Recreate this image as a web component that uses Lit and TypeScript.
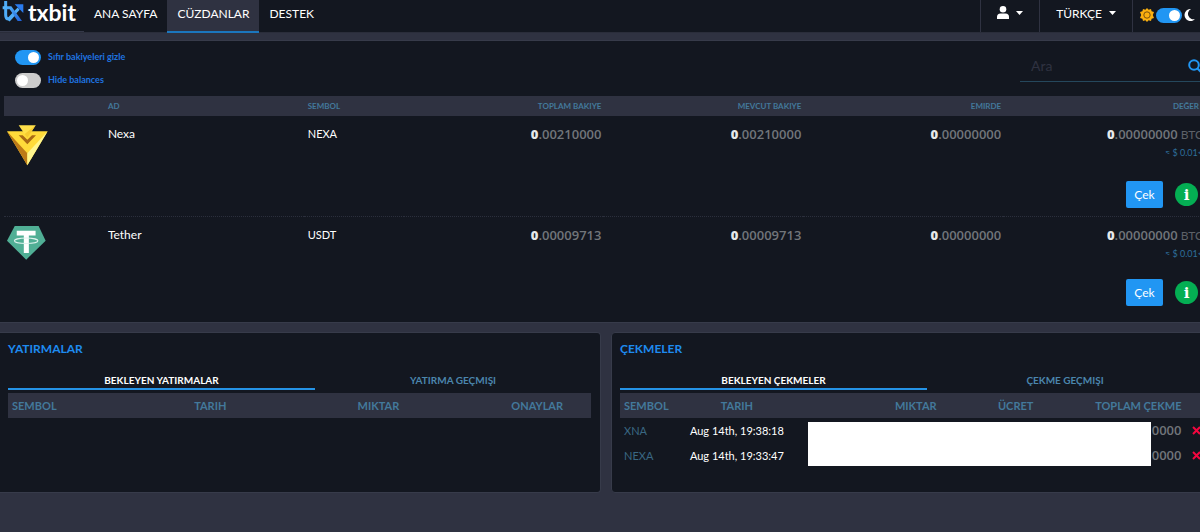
import { LitElement, html, css, svg } from "lit";
import { customElement, state } from "lit/decorators.js";

interface Wallet { name: string; symbol: string; icon: unknown; total: string; available: string; }

const nexaIcon = html`<svg viewBox="0 0 123 123" width="41" height="41" aria-hidden="true">
  <path d="M0 19H122L61 121Z" fill="#ffdb3a"/>
  <path d="M0 19L61 85V121Z" fill="#bd7a18"/>
  <path d="M122 19L61 85V121Z" fill="#fff68e"/>
  <path d="M35 31H47L61 44L75 31H87L61 58Z" fill="#a96a15"/>
  <path d="M35 1H86L61 39Z" fill="#ffe04a"/>
  <path d="M61 39L53 27L86 1Z" fill="#f6cb30"/>
</svg>`;
const tetherIcon = html`<svg viewBox="0 0 116 113" width="39" height="38" aria-hidden="true">
  <path d="M23 0H94L115 44L57 100L0 44Z" fill="#50af95"/>
  <path d="M29 14H85V28H65V80H50V28H29Z" fill="#fff"/>
  <ellipse cx="57" cy="44" rx="35" ry="8" fill="none" stroke="#dff3ee" stroke-width="3"/>
</svg>`;

const wallets: Wallet[] = [
  { name: "Nexa", symbol: "NEXA", icon: nexaIcon, total: "00210000", available: "00210000" },
  { name: "Tether", symbol: "USDT", icon: tetherIcon, total: "00009713", available: "00009713" },
];
const pending = [
  { symbol: "XNA", date: "Aug 14th, 19:38:18" },
  { symbol: "NEXA", date: "Aug 14th, 19:33:47" },
];
const amount = (f: string) => html`<span class="amount"><b>0</b>.${f}</span>`;

@customElement("app-root")
export class AppRoot extends LitElement {
  @state() private hideZero = true;
  @state() private hideBalances = false;
  @state() private dark = true;

  static styles = css`
    :host { display: block; overflow: hidden; min-height: 100vh; background: #2f3241; color: #fff; font: 13px/16px Lato, sans-serif; }
    * { box-sizing: border-box; }
    a { color: inherit; text-decoration: none; }
    button { font: inherit; color: inherit; border: 0; background: none; padding: 0; cursor: pointer; }
    h2 { margin: 0; }
    nav { display: flex; height: 33px; background: #131720; border-bottom: 1px solid #2a2d3a; font-size: 12px; }
    .brand { display: flex; gap: 4px; width: 84px; padding-left: 2px; border-bottom: 1px solid #343848; }
    .brand svg { margin-top: 1px; flex: none; }
    .word { font-size: 23px; line-height: 24px; font-weight: 700; }
    .tab { display: flex; justify-content: center; padding: 6px 10px 0; }
    .tab.active { background: #2f3241; border-bottom: 2px solid #1b76bd; height: 33px; }
    .right { margin-left: auto; display: flex; }
    .menu { display: flex; align-items: flex-start; gap: 7px; padding: 6px 16px 0; border-left: 1px solid #2f3241; height: 32px; }
    .menu .caret { margin-top: 5px; }
    .theme { display: flex; align-items: center; gap: 2px; padding: 0 4px 2px 7px; border-left: 1px solid #2f3241; }
    .switch { appearance: none; margin: 0; width: 26px; height: 15px; border-radius: 8px; background: #ccc; padding: 2px; display: flex; flex: none; cursor: pointer; }
    .switch::before { content: ""; width: 11px; height: 11px; border-radius: 50%; background: #fff; }
    .switch:checked { background: #2196f3; justify-content: flex-end; }

    .page { width: calc(100% + 12px); padding-top: 7px; }
    .panel { background: #131720; border: 1px solid #373b4a; border-radius: 4px; }
    .wallets { border-left: 0; border-radius: 0; padding: 8px 8px 8px 4px; }
    .tools { display: flex; justify-content: space-between; }
    .options { display: flex; flex-direction: column; gap: 7px; padding-left: 11px; height: 47px; }
    .options label { display: flex; align-items: center; gap: 7px; height: 16px; font-size: 9px; font-weight: 700; color: #1f74e0; }
    .search { display: flex; align-items: center; width: 183px; height: 33px; border-bottom: 1px solid #25475c; padding: 1px 1px 0 11px; }
    .search input { flex: 1; min-width: 0; border: 0; padding: 0; background: none; outline: 0; color: #fff; font: 14px/18px Lato, sans-serif; }
    .search input::placeholder { color: #2f3241; opacity: 1; }

    table { width: 100%; table-layout: fixed; border-collapse: collapse; }
    th { color: #43799b; background: #2f3241; font-weight: 700; }
    td, th { padding: 0 4px; text-align: left; }
    .num { text-align: right; }
    .mid { text-align: center; }
    .main th { height: 20px; font-size: 8px; line-height: 12px; }
    .main th.num, .main td.num { padding-right: 2px; }
    .main td { vertical-align: top; padding-top: 10px; font-size: 12px; }
    .main td.symbol { font-size: 11px; }
    .main td.coin { padding: 9px 3px 7px; }
    .coin svg { display: block; }
    .main tr.actions td { padding: 8px 5px 8px 0; }
    .main tbody + tbody { border-top: 1px dotted #2b2f3c; }
    .main th.worth { padding-right: 4px; }
    .main td.value { padding-right: 0; white-space: nowrap; }
    .amount { font: 600 13px/16px "Open Sans", sans-serif; color: #71757a; }
    .amount b { color: #e6e8ea; }
    .unit { color: #5d6167; }
    .fiat { display: block; padding-top: 3px; font-size: 9px; line-height: 14px; color: #2e6f9c; }
    .buttons { display: flex; justify-content: flex-end; align-items: center; gap: 12px; }
    .withdraw { width: 37px; height: 27px; border-radius: 2px; background: #2196f3; }
    .info { width: 23px; height: 23px; border-radius: 50%; background: #04ae53; font: 700 15px/22px "DejaVu Serif", serif; }

    .lower { display: grid; grid-template-columns: 1fr 1fr; gap: 10px; padding-top: 9px; }
    .card { position: relative; min-height: 161px; padding: 8px 8px; }
    .card.first { border-left: 0; padding-right: 9px; border-radius: 0 4px 4px 0; }
    h2 { font-size: 12px; line-height: 16px; font-weight: 700; color: #1e8bf0; }
    .tabs { display: grid; grid-template-columns: 307fr 276fr; padding-top: 14px; }
    .tabs button { height: 19px; font-size: 10px; line-height: 16px; font-weight: 700; color: #4b86ad; border-bottom: 2px solid transparent; }
    .tabs .on { color: #fff; border-bottom-color: #2593e6; }
    .history { margin-top: 3px; font-size: 11px; }
    .history th { height: 25px; }
    .history td { height: 25px; white-space: nowrap; }
    .sym { color: #3a6883; }
    .mask { position: absolute; top: 89px; left: 196px; right: 60px; height: 44px; background: #fff; }
    .remove { display: block; margin-left: 3px; }
  `;

  private caret() {
    return html`<svg class="caret" viewBox="0 0 7 4" width="7" height="4" aria-hidden="true"><path d="M0 0H7L3.5 4Z" fill="#fff"/></svg>`;
  }

  render() {
    return html`
      <nav>
        <a class="brand" href="#" aria-label="txbit">
          <svg viewBox="6 0 66 66" width="22" height="22" aria-hidden="true">
            <defs><linearGradient id="g" x1="0" y1="0" x2="1" y2="1"><stop offset="0" stop-color="#58bcff"/><stop offset="1" stop-color="#1e5fd8"/></linearGradient></defs>
            <path d="M17 0V42Q17 54 26 54L56 23" fill="none" stroke="#4fadf8" stroke-width="9"/>
            <path d="M8 16H34L66 60H53L29 25H8Z" fill="url(#g)"/>
            <path d="M44 10H70V36Z" fill="#2a7cf0"/>
            <path d="M26 59L41 42" stroke="#4fadf8" stroke-width="8"/>
          </svg>
          <span class="word">txbit</span>
        </a>
        <a class="tab" href="#">ANA SAYFA</a>
        <a class="tab active" href="#">CÜZDANLAR</a>
        <a class="tab" href="#">DESTEK</a>
        <div class="right">
          <button class="menu" aria-label="Hesap">
            <svg viewBox="0 0 12 13" width="12" height="13" aria-hidden="true"><circle cx="6" cy="3.3" r="3.3" fill="#fff"/><path d="M0 13V11Q0 7.5 3.5 7.5H8.5Q12 7.5 12 11V13Z" fill="#fff"/></svg>
            ${this.caret()}
          </button>
          <button class="menu">TÜRKÇE ${this.caret()}</button>
          <div class="theme">
            <svg viewBox="0 0 14 14" width="14" height="14" aria-hidden="true"><path d="M7 0L8.6 1.8L11 1L11.6 3.2L14 4L12.8 7L14 10L11.6 10.8L11 13L8.6 12.2L7 14L5.4 12.2L3 13L2.4 10.8L0 10L1.2 7L0 4L2.4 3.2L3 1L5.4 1.8Z" fill="#fbb00f"/><circle cx="7" cy="7" r="3.2" fill="none" stroke="#7a5210"/></svg>
            <input class="switch" type="checkbox" aria-label="Tema" .checked=${this.dark} @change=${() => (this.dark = !this.dark)} />
            <svg viewBox="0 0 12 12" width="12" height="12" aria-hidden="true"><path d="M7 0A6 6 0 1 0 11 10A5.4 5.4 0 0 1 7 0Z" fill="#fff"/></svg>
          </div>
        </div>
      </nav>
      <main class="page">
        <section class="panel wallets">
          <div class="tools">
            <div class="options">
              <label><input class="switch" type="checkbox" .checked=${this.hideZero} @change=${() => (this.hideZero = !this.hideZero)} />Sıfır bakiyeleri gizle</label>
              <label><input class="switch" type="checkbox" .checked=${this.hideBalances} @change=${() => (this.hideBalances = !this.hideBalances)} />Hide balances</label>
            </div>
            <label class="search">
              <input type="text" placeholder="Ara" aria-label="Ara" />
              <svg viewBox="0 0 14 14" width="14" height="14" aria-hidden="true"><circle cx="6" cy="6" r="4.8" fill="none" stroke="#2196f3" stroke-width="2"/><path d="M9.5 9.5L13 13" stroke="#2196f3" stroke-width="2"/></svg>
            </label>
          </div>
          <table class="main">
            <colgroup><col style="width:8.33%"><col style="width:16.67%"><col style="width:8.33%"><col style="width:16.67%"><col style="width:16.67%"><col style="width:16.67%"><col style="width:16.66%"></colgroup>
            <thead><tr><th></th><th>AD</th><th>SEMBOL</th><th class="num">TOPLAM BAKIYE</th><th class="num">MEVCUT BAKIYE</th><th class="num">EMIRDE</th><th class="num worth">DEĞER</th></tr></thead>
            ${wallets.map((w) => html`<tbody>
              <tr>
                <td class="coin">${w.icon}</td><td>${w.name}</td><td class="symbol">${w.symbol}</td>
                <td class="num">${amount(w.total)}</td><td class="num">${amount(w.available)}</td><td class="num">${amount("00000000")}</td>
                <td class="num value">${amount("00000000")} <span class="unit">BTC</span><span class="fiat">≈ $ 0.01&lt;</span></td>
              </tr>
              <tr class="actions"><td colspan="7"><div class="buttons"><button class="withdraw">Çek</button><button class="info" aria-label="Bilgi">i</button></div></td></tr>
            </tbody>`)}
          </table>
        </section>
        <div class="lower">
          <section class="panel card first">
            <h2>YATIRMALAR</h2>
            <div class="tabs"><button class="on">BEKLEYEN YATIRMALAR</button><button>YATIRMA GEÇMIŞI</button></div>
            <table class="history">
              <colgroup><col style="width:19%"><col style="width:31.4%"><col style="width:17.4%"><col style="width:28.1%"><col></colgroup>
              <thead><tr><th>SEMBOL</th><th class="mid">TARIH</th><th class="num">MIKTAR</th><th class="num">ONAYLAR</th><th></th></tr></thead>
            </table>
          </section>
          <section class="panel card">
            <h2>ÇEKMELER</h2>
            <div class="tabs"><button class="on">BEKLEYEN ÇEKMELER</button><button>ÇEKME GEÇMIŞI</button></div>
            <table class="history">
              <colgroup><col style="width:10.3%"><col style="width:19.5%"><col style="width:25.2%"><col style="width:16.6%"><col style="width:25.4%"><col></colgroup>
              <thead><tr><th>SEMBOL</th><th class="mid">TARIH</th><th class="num">MIKTAR</th><th class="num">ÜCRET</th><th class="num">TOPLAM ÇEKME</th><th></th></tr></thead>
              <tbody>${pending.map((p) => html`<tr><td class="sym">${p.symbol}</td><td class="mid">${p.date}</td><td></td><td></td><td class="num"><span class="amount">0000</span></td>
                <td><button class="remove" aria-label="Sil"><svg viewBox="0 0 9 9" width="9" height="9"><path d="M1 1L8 8M8 1L1 8" stroke="#f4063f" stroke-width="2"/></svg></button></td></tr>`)}</tbody>
            </table>
            <div class="mask"></div>
          </section>
        </div>
      </main>`;
  }
}
